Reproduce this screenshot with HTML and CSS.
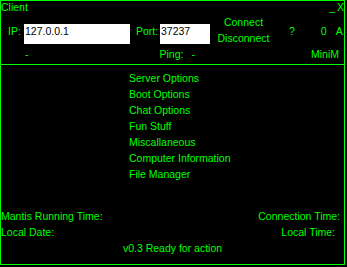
FILE: index.html
```html
<!DOCTYPE html>
<html>
<head>
<meta charset="utf-8">
<title>Client</title>
<link rel="stylesheet" href="styles.css">
</head>
<body>
<div class="window">
  <header class="header">
    <div class="titlebar">
      <span class="title">Client</span>
      <span class="winbtns"><span class="min">_</span><span class="close">X</span></span>
    </div>
    <div class="controls">
      <label class="lbl lbl-ip" for="ip">IP:</label>
      <input id="ip" class="field field-ip" type="text" value="127.0.0.1">
      <label class="lbl lbl-port" for="port">Port:</label>
      <input id="port" class="field field-port" type="text" value="37237">
      <div class="conn">
        <div>Connect</div>
        <div>Disconnect</div>
      </div>
      <span class="lbl q">?</span>
      <span class="lbl zero">0</span>
      <span class="lbl a">A</span>
    </div>
    <div class="info">
      <span class="dash">-</span>
      <span class="ping">Ping:</span>
      <span class="pingval">-</span>
      <span class="minim">MiniM</span>
    </div>
  </header>
  <main class="main">
    <ul class="menu">
      <li>Server Options</li>
      <li>Boot Options</li>
      <li>Chat Options</li>
      <li>Fun Stuff</li>
      <li>Miscallaneous</li>
      <li>Computer Information</li>
      <li>File Manager</li>
    </ul>
    <div class="footer">
      <div class="frow"><span>Mantis Running Time:</span><span class="r1">Connection Time:</span></div>
      <div class="frow"><span>Local Date:</span><span class="r2">Local Time:</span></div>
      <div class="status">v0.3 Ready for action</div>
    </div>
  </main>
</div>
</body>
</html>
```
FILE: styles.css
```css
html, body {
  margin: 0;
  padding: 0;
  background: #000;
}
body {
  font-family: "Liberation Sans", Arial, sans-serif;
  font-size: 10.5px;
  color: #00ff00;
  width: 347px;
  height: 267px;
  overflow: hidden;
}
.window {
  width: 345px;
  height: 265px;
  box-sizing: border-box;
  border: 1px solid #00ff00;
  display: flex;
  flex-direction: column;
}
.header {
  height: 63px;
  display: flex;
  flex-direction: column;
}
.titlebar {
  height: 11px;
  line-height: 12px;
  display: flex;
  justify-content: space-between;
}
.winbtns {
  display: flex;
}
.min { margin-right: 2px; }
.controls {
  height: 36px;
  display: flex;
  align-items: flex-start;
}
.lbl {
  line-height: 12px;
  margin-top: 13px;
}
.lbl-ip {
  margin-left: 7px;
  width: 16px;
}
.field {
  margin-top: 12px;
  height: 20px;
  box-sizing: border-box;
  border: 0;
  outline: none;
  background: #fff;
  color: #000;
  font: inherit;
  padding: 0 0 6px 1px;
}
.field-ip { width: 106px; }
.lbl-port {
  width: 24px;
  padding-left: 6px;
}
.field-port { width: 50px; }
.conn {
  width: 67px;
  margin-top: 2px;
  line-height: 16px;
  text-align: center;
}
.q { margin-left: 12px; }
.zero { margin-left: 26px; }
.a { margin-left: 9px; }
.info {
  height: 12px;
  line-height: 12px;
  display: flex;
}
.dash { margin-left: 24px; }
.ping { margin-left: 131px; }
.pingval { margin-left: 8px; }
.minim { margin-left: auto; margin-right: 5px; }
.main {
  flex: 1;
  border-top: 1px solid #00ff00;
  display: flex;
  flex-direction: column;
}
.menu {
  list-style: none;
  margin: 5px 0 0 128px;
  padding: 0;
  line-height: 16px;
}
.footer {
  margin-top: 26px;
  line-height: 16px;
}
.frow {
  display: flex;
  justify-content: space-between;
}
.r1 { margin-right: 4px; }
.r2 { margin-right: 9px; }
.status { text-align: center; }
```
